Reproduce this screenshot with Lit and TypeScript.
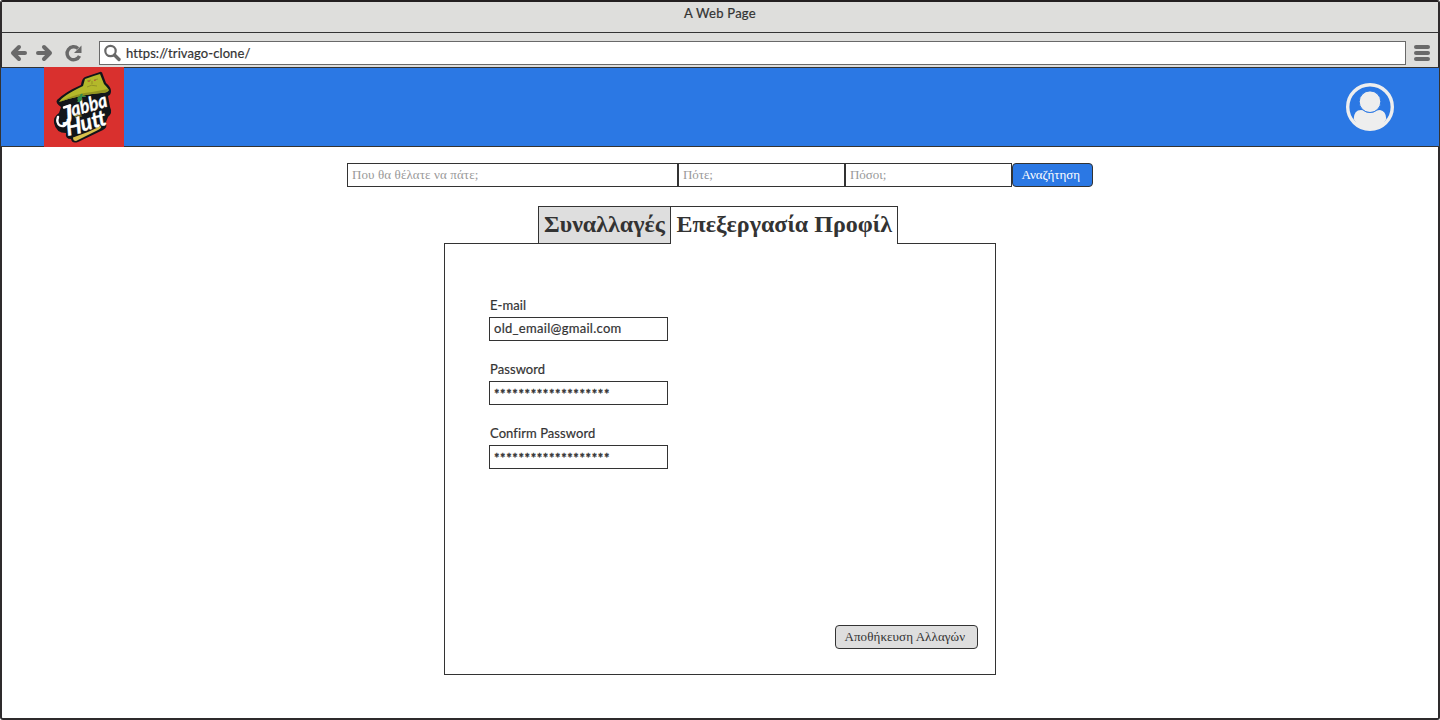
import { LitElement, html, css } from "lit";
import { customElement, property } from "lit/decorators.js";

@customElement("brand-logo")
class BrandLogo extends LitElement {
  static styles = css`
    :host { display: block; width: 80px; height: 80px; }
    svg { display: block; }
    .word { font-family: "Lato", sans-serif; font-weight: 700; font-style: italic; fill: #fff; stroke: #fff; stroke-width: 0.3; }
    .the { font-family: "Lato", sans-serif; font-weight: 700; fill: #9a8d25; }
  `;
  render() {
    return html`<svg width="80" height="80" viewBox="0 0 80 80">
      <rect width="80" height="80" fill="#d9302e" />
      <path fill="#12151a" d="M37 18 Q38 11 41 10 L56 5 Q58 4 59 8 L62 16 Q67 20 67 24 Q67 28 64 29 L66 40 Q69 46 64 50 L62 55 Q64 60 59 63 L34 75 Q28 77 27 72 Q21 72 22 66 Q12 66 10 56 Q9 50 15 46 L17 40 Q11 36 13 33 Q21 25 37 18Z" />
      <path fill="#b4b82a" d="M39 19 L41 12 Q49 9 56 7 L60 17 Q63 20 65 23 Q64 26 57 26 Q35 28 15 35 Q18 29 39 19Z" />
      <path fill="#929321" d="M15 35 Q33 26 48 25 L64 22 Q64 26 57 26 Q35 28 15 35Z" />
      <path fill="none" stroke="#7c7924" stroke-width=".6" d="M43 14l4-1M50 13l4-1M43 20q4-3 10-1M48 14v3" />
      <path fill="none" stroke="#b65332" stroke-width=".9" d="M44 14.5l2-.5M50 13.5l2-.5" />
      <path fill="#d8bf4b" d="M29 70.500 Q43 66 57 59 Q58 61 54 63 L32 74 Q29 74 29 70.500Z" />
      <path fill="none" stroke="#fff" stroke-width="2.4" stroke-linecap="round" d="M23 56 Q20 60.500 16 58.500 Q12 56 14 50M20 40.500l6-2" />
      <text class="word" font-size="26" textLength="11" lengthAdjust="spacingAndGlyphs" transform="translate(19.500 58) rotate(-10)">J</text>
      <text class="word" font-size="20" textLength="37" lengthAdjust="spacingAndGlyphs" transform="translate(29 49.500) rotate(-16)">abba</text>
      <text class="the" font-size="5" transform="translate(31 51.500) rotate(-14)">the</text>
      <text class="word" font-size="23" textLength="16" lengthAdjust="spacingAndGlyphs" transform="translate(23.500 69) rotate(-12)">H</text>
      <text class="word" font-size="22" textLength="26" lengthAdjust="spacingAndGlyphs" transform="translate(38.500 64.500) rotate(-16)">utt</text>
      <path fill="#348b4a" d="M34 34q-2-4 2-5 0-3 3-2l-1 2q4-1 4 1l-4 0q1 4-3 5l-2 0z" />
    </svg>`;
  }
}

@customElement("text-field")
class TextField extends LitElement {
  @property() label = "";
  @property() value = "";
  static styles = css`
    :host { display: block; height: 64px; }
    .label { height: 20px; line-height: 19px; padding-left: 1px; margin-bottom: 1px; letter-spacing: 0.08px; -webkit-text-stroke: 0.2px #333; }
    .box { box-sizing: border-box; width: 179px; height: 24px; border: 1px solid #333; padding-left: 4px; line-height: 21px; letter-spacing: 0.29px; white-space: nowrap; -webkit-text-stroke: 0.2px #333; }
    .secret { letter-spacing: 0.58px; line-height: 24px; -webkit-text-stroke: 0.4px #333; }
  `;
  render() {
    return html`<div class="label">${this.label}</div>
      <div class="box ${this.value.startsWith("*") ? "secret" : ""}">${this.value}</div>`;
  }
}

@customElement("app-root")
class AppRoot extends LitElement {
  static styles = css`
    :host { display: block; font-family: "Lato", sans-serif; font-size: 13px; color: #333; }
    * { box-sizing: border-box; }
    .window { width: 1440px; height: 720px; background: #fff; border: 2px solid #2e2b2c; border-top-color: #231f20; border-radius: 3px; }
    .title { height: 31px; background: #dededc; border-bottom: 1px solid #333; text-align: center; line-height: 23px; letter-spacing: 0.25px; -webkit-text-stroke: 0.2px #333; }
    .tools { height: 34px; background: #dededc; display: flex; align-items: flex-start; }
    .nav { width: 97px; height: 34px; flex: none; }
    .url { width: 1307px; height: 24px; margin-top: 8px; background: #fff; border: 1px solid #696969; display: flex; align-items: center; line-height: 22px; letter-spacing: 0.09px; -webkit-text-stroke: 0.2px #333; }
    .url svg { width: 26px; height: 22px; flex: none; }
    .burger { width: 16px; margin: 12px 0 0 8px; display: grid; gap: 2px; }
    .burger i { height: 4px; border-radius: 2px; background: #696969; }
    .banner { height: 80px; margin: 0 -2px; background: #2b78e4; border: 1px solid #333; display: flex; justify-content: space-between; align-items: flex-start; padding: 0 44px 0 43px; }
    .banner brand-logo { margin-top: -1px; }
    .avatar { width: 50px; height: 50px; margin-top: 14px; }
    .greek { font-family: "Liberation Serif", serif; }
    .search { display: flex; justify-content: center; margin-top: 16px; height: 24px; font-size: 13px; color: #999; line-height: 22px; }
    .cell { border: 1px solid #333; padding-left: 4px; width: 167px; letter-spacing: -0.05px; }
    .wide { width: 331px; letter-spacing: 0.1px; }
    .go { width: 81px; border: 1px solid #333; border-radius: 4px; background: #2b78e4; color: #fff; padding-left: 8.5px; letter-spacing: 0; }
    .tabs { display: flex; margin: 19px 0 0 536px; height: 38px; font-size: 24px; font-weight: 700; line-height: 35px; position: relative; }
    .tab { border: 1px solid #333; padding-left: 5px; white-space: nowrap; }
    .idle { width: 133px; background: #dedede; }
    .open { width: 227px; border-left: 0; border-bottom: 0; background: #fff; padding-left: 5.5px; letter-spacing: 0; }
    .panel { width: 552px; height: 432px; margin: -1px 0 0 442px; border: 1px solid #333; display: flex; flex-direction: column; justify-content: space-between; padding: 52px 17px 25px 44px; }
    .save { align-self: flex-end; width: 143px; height: 24px; border: 1px solid #333; border-radius: 4px; background: #dedede; padding-left: 8.5px; line-height: 22px; letter-spacing: 0.08px; white-space: nowrap; }
  `;
  render() {
    return html`<div class="window">
      <div class="title">A Web Page</div>
      <div class="tools">
        <svg class="nav" viewBox="2 33 97 34" fill="none" stroke="#696969" stroke-width="4" stroke-linecap="round" stroke-linejoin="round">
          <path d="M19 47 L13 53 L19 59 M14 53 H25" />
          <path d="M44 47 L50 53 L44 59 M38 53 H49" />
          <path stroke-width="3.4" stroke-linecap="butt" d="M79.500 56 A6.500 6.500 0 1 1 78 48.500" />
          <path fill="#696969" stroke="none" d="M81.5 45.5 V53 H74z" />
        </svg>
        <div class="url">
          <svg viewBox="100 42 26 22" fill="none" stroke="#696969"><circle cx="110.5" cy="51" r="5.2" stroke-width="2.2" /><path d="M114.5 55 L119 59.500" stroke-width="3.4" stroke-linecap="round" /></svg>
          <span>https://trivago-clone/</span>
        </div>
        <div class="burger"><i></i><i></i><i></i></div>
      </div>
      <div class="banner">
        <brand-logo></brand-logo>
        <svg class="avatar" viewBox="0 0 50 50">
          <circle cx="25" cy="25" r="22.3" fill="none" stroke="#eee" stroke-width="3.4" />
          <path fill="#eee" d="M8.7 37 Q9 28 16 28 Q18 28 19 29 Q25 33 31 29 Q33 28 35 28 Q41 29 41.3 37 Q36 48 25 48 Q14 48 8.7 37Z" />
          <circle cx="25" cy="19.7" r="10.8" fill="#eee" stroke="#2b78e4" stroke-width="1" />
        </svg>
      </div>
      <div class="search greek">
        <div class="cell wide">Που θα θέλατε να πάτε;</div>
        <div class="cell">Πότε;</div>
        <div class="cell">Πόσοι;</div>
        <div class="go">Αναζήτηση</div>
      </div>
      <div class="tabs greek">
        <div class="tab idle">Συναλλαγές</div>
        <div class="tab open">Επεξεργασία Προφίλ</div>
      </div>
      <div class="panel">
        <div>
          <text-field label="E-mail" value="old_email@gmail.com"></text-field>
          <text-field label="Password" value="*******************"></text-field>
          <text-field label="Confirm Password" value="*******************"></text-field>
        </div>
        <div class="save greek">Αποθήκευση Αλλαγών</div>
      </div>
    </div>`;
  }
}
